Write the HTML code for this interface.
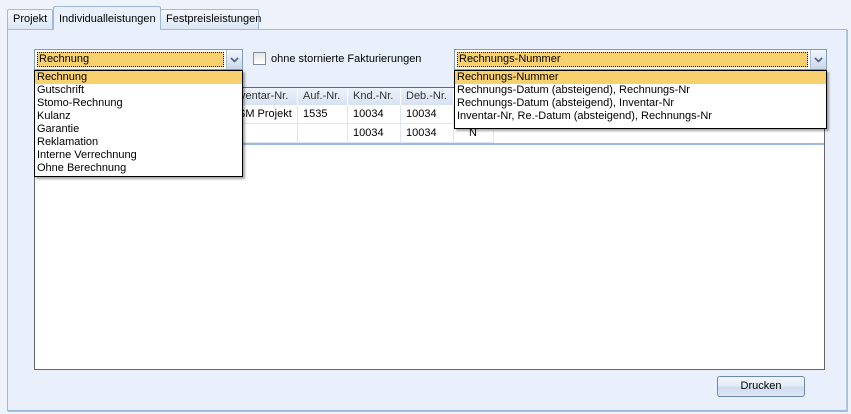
<!DOCTYPE html>
<html><head><meta charset="utf-8"><style>
*{box-sizing:border-box;margin:0;padding:0}
body{width:851px;height:414px;background:#eef3fb;font-family:"Liberation Sans",sans-serif;font-size:11px;color:#000;position:relative;overflow:hidden}
.a{position:absolute}
.tab{position:absolute;border:1px solid #9db9dd;border-bottom:none;background:linear-gradient(#f4f8fd,#dbe6f5);padding:3px 4px 0 5px;height:20px;border-radius:2px 2px 0 0;font-size:11px}
.combo{position:absolute;border:1px solid #7f9db9;background:#fff}
.sel{background:#f8d06e}
.btn{position:absolute;width:16px;height:19px;top:0;right:0;background:linear-gradient(#f4f7fc,#c9d6ea);border-left:1px solid #aebfd8}
.list{position:absolute;background:#fff;border:1px solid #000;box-shadow:2px 2px 2px rgba(0,0,0,.35)}
.list div{height:13px;line-height:13px;padding-left:2px;white-space:nowrap}
.th{position:absolute;top:88px;height:17px;line-height:17px;background:linear-gradient(#eef3fb,#d6e2f3);border-right:1px solid #fff;color:#333;padding-left:5px}
.td{position:absolute;height:19px;line-height:19px;border-right:1px solid #dde6f2;border-bottom:1px solid #dde6f2;padding-left:5px}
</style></head><body>
<div class="a" style="left:7px;top:29px;width:840px;height:382px;background:#e9f0fb;border:1px solid #9db9dd;border-right-color:#b7c8e2;box-shadow:1px 1px 0 #a9bcd9"></div>
<div class="tab" style="left:7px;top:9px;width:46px">Projekt</div>
<div class="tab" style="left:160px;top:9px;width:99px">Festpreisleistungen</div>
<div class="tab" style="left:53px;top:6px;width:108px;height:24px;background:#e9f0fb;padding-top:6px;border-color:#9db9dd;z-index:2">Individualleistungen</div>

<div class="a" style="left:34px;top:87px;width:791px;height:283px;background:#fff;border:1px solid #666"></div>
<div class="th" style="left:35px;width:263px;padding-left:205px">ventar-Nr.</div>
<div class="th" style="left:298px;width:50px">Auf.-Nr.</div>
<div class="th" style="left:348px;width:53px">Knd.-Nr.</div>
<div class="th" style="left:401px;width:53px">Deb.-Nr.</div>
<div class="th" style="left:454px;width:370px"></div>
<div class="td" style="left:35px;top:105px;width:263px;padding-left:203px">SM Projekt</div>
<div class="td" style="left:298px;top:105px;width:50px">1535</div>
<div class="td" style="left:348px;top:105px;width:53px">10034</div>
<div class="td" style="left:401px;top:105px;width:53px">10034</div>
<div class="td" style="left:454px;top:105px;width:40px"></div>
<div class="td" style="left:35px;top:124px;width:263px"></div>
<div class="td" style="left:298px;top:124px;width:50px"></div>
<div class="td" style="left:348px;top:124px;width:53px">10034</div>
<div class="td" style="left:401px;top:124px;width:53px">10034</div>
<div class="td" style="left:454px;top:124px;width:40px;padding-left:15px">N</div>
<div class="a" style="left:35px;top:143px;width:789px;height:2px;background:#9db9dd"></div>

<div class="combo" style="left:34px;top:49px;width:209px;height:21px">
<div class="a sel" style="left:2px;top:2px;width:187px;height:15px;border:1px dotted #00008b;line-height:13px;padding-left:1px">Rechnung</div>
<div class="btn"><svg width="15" height="19"><path d="M4 8l3.5 3.5L11 8" fill="none" stroke="#4d6185" stroke-width="1.6"/></svg></div>
</div>
<div class="list" style="left:34px;top:70px;width:209px;height:107px">
<div class="sel">Rechnung</div><div>Gutschrift</div><div>Stomo-Rechnung</div><div>Kulanz</div><div>Garantie</div><div>Reklamation</div><div>Interne Verrechnung</div><div>Ohne Berechnung</div>
</div>

<div class="a" style="left:253px;top:52px;width:13px;height:13px;border:1px solid #7f8c9c;background:linear-gradient(#e6e6e6,#fff)"></div>
<div class="a" style="left:271px;top:53px">ohne stornierte Fakturierungen</div>

<div class="combo" style="left:454px;top:49px;width:373px;height:21px">
<div class="a sel" style="left:2px;top:2px;width:351px;height:15px;border:1px dotted #00008b;line-height:13px;padding-left:1px">Rechnungs-Nummer</div>
<div class="btn"><svg width="15" height="19"><path d="M4 8l3.5 3.5L11 8" fill="none" stroke="#4d6185" stroke-width="1.6"/></svg></div>
</div>
<div class="list" style="left:454px;top:70px;width:373px;height:59px">
<div class="sel">Rechnungs-Nummer</div><div>Rechnungs-Datum (absteigend), Rechnungs-Nr</div><div>Rechnungs-Datum (absteigend), Inventar-Nr</div><div>Inventar-Nr, Re.-Datum (absteigend), Rechnungs-Nr</div>
</div>

<div class="a" style="left:717px;top:376px;width:88px;height:21px;border:1px solid #6d88ad;border-radius:3px;background:linear-gradient(#f2f6fc 0%,#e3ebf7 50%,#cfdcef 51%,#dce6f4 100%);text-align:center;line-height:19px">Drucken</div>
</body></html>
